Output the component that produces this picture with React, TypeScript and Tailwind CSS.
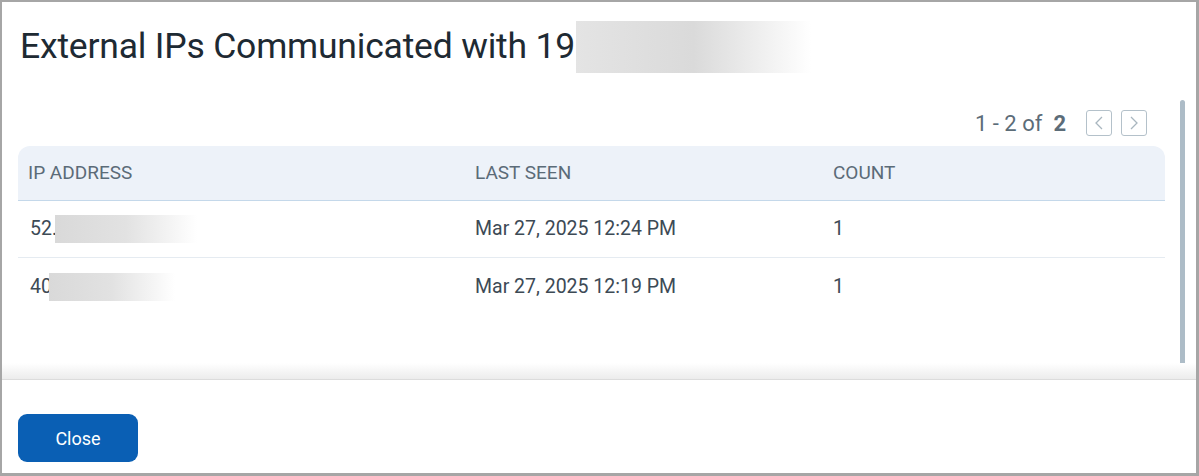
import React from "react";

function Blur({ w, h, ml }: { w: number; h: number; ml: number }) {
  return (
    <span
      className="inline-block align-middle bg-gradient-to-r from-[#d9d9d9] via-[#e2e2e2] to-white relative"
      style={{ width: w, height: h, marginLeft: ml }}
    />
  );
}

export default function App() {
  const rows = [
    { ip: "52.", blur: 142, ml: -2, seen: "Mar 27, 2025 12:24 PM", count: "1" },
    { ip: "40", blur: 126, ml: -3, seen: "Mar 27, 2025 12:19 PM", count: "1" },
  ];
  return (
    <div
      className="w-[1199px] h-[476px] bg-white border-2 border-r-[3px] border-b-[3px] border-[#a6a6a6] flex flex-col overflow-hidden"
      style={{ fontFamily: "Roboto, 'Noto Sans', Arial, sans-serif" }}
    >
      <div className="h-[90px] shrink-0 flex items-center pl-[18px]">
        <h1 className="text-[35.5px] leading-none text-[#1e2a33] font-normal flex items-center tracking-[-0.2px]">
          External IPs Communicated with 19
          <span className="inline-block w-[235px] h-[52px] bg-gradient-to-r from-[#e4e4e4] via-[#dadada] to-white ml-[1px]" />
        </h1>
      </div>

      <div className="relative flex-1 min-h-0">
        <div className="absolute right-[11px] top-[8px] w-[5px] h-[276px] rounded-full bg-[#adbcc7]" />
        <div className="pl-[16px] pr-[31px] pt-[18px]">
          <div className="flex items-center justify-end pr-[18px] h-[26px]">
            <span className="text-[22px] text-[#5c6c78] flex items-center">
              1 - 2 of <span className="font-bold ml-[11px]">2</span>
            </span>
            <button className="ml-[20px] w-[26px] h-[26px] border border-[#b4c1ca] rounded-[3px] flex items-center justify-center">
              <svg width="12" height="16" viewBox="0 0 12 16" fill="none">
                <path d="M9 2 L3 8 L9 14" stroke="#a9b6bf" strokeWidth="1.3" />
              </svg>
            </button>
            <button className="ml-[9px] w-[26px] h-[26px] border border-[#b4c1ca] rounded-[3px] flex items-center justify-center">
              <svg width="12" height="16" viewBox="0 0 12 16" fill="none">
                <path d="M3 2 L9 8 L3 14" stroke="#a9b6bf" strokeWidth="1.3" />
              </svg>
            </button>
          </div>

          <div className="mt-[10px]">
            <div className="h-[55px] bg-[#edf2f9] rounded-t-[12px] border-b border-[#c4d8ea] grid grid-cols-[457px_358px_1fr] items-center text-[19px] text-[#5b6b78] uppercase">
              <div className="pl-[10px]">IP Address</div>
              <div>Last Seen</div>
              <div>Count</div>
            </div>
            {rows.map((r, i) => (
              <div
                key={i}
                className={`h-[57px] grid grid-cols-[457px_358px_1fr] items-center text-[19.5px] text-[#3d4a55] ${i === 0 ? "border-b border-[#e5ebf1]" : ""}`}
              >
                <div className="pl-[12px] flex items-center">
                  {r.ip}
                  <Blur w={r.blur} h={28} ml={r.ml} />
                </div>
                <div>{r.seen}</div>
                <div>{r.count}</div>
              </div>
            ))}
          </div>
        </div>
        <div className="absolute left-0 right-0 bottom-0 h-[16px] bg-gradient-to-b from-white to-[#ececec]" />
      </div>

      <div className="h-[94px] shrink-0 border-t border-[#dcdcdc] pl-[16px] pt-[34px]">
        <button className="w-[120px] h-[48px] rounded-[9px] bg-[#0a5fb4] text-white text-[18px]">
          Close
        </button>
      </div>
    </div>
  );
}
